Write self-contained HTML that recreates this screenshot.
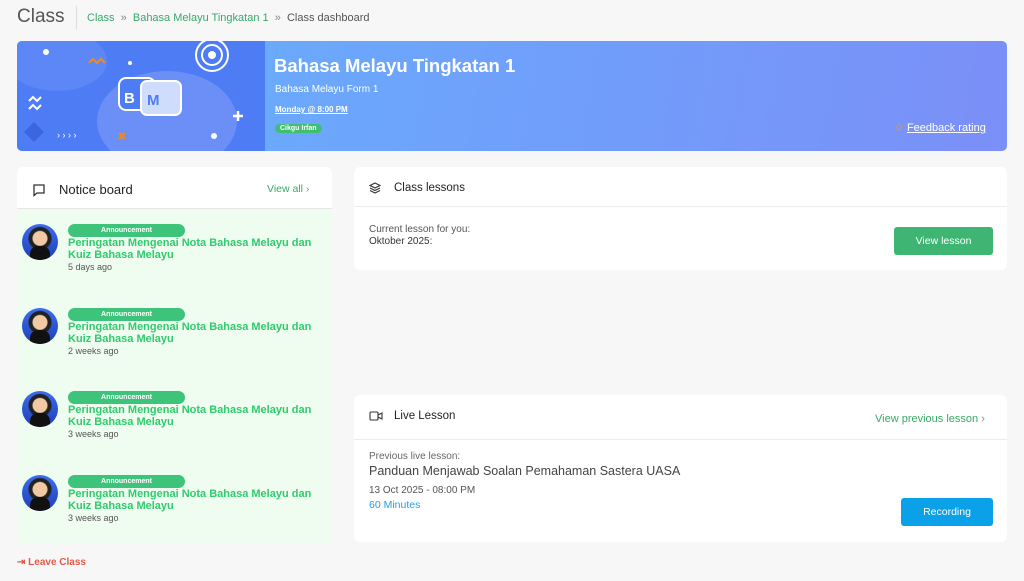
<!DOCTYPE html>
<html><head><style>
*{box-sizing:border-box;margin:0;padding:0}
body{width:1024px;height:581px;background:#f7f7f7;font-family:"Liberation Sans",sans-serif;position:relative;overflow:hidden;color:#333}
.a{position:absolute}
.card{position:absolute;background:#fff;border-radius:6px}
.item .av{position:absolute;left:5px;width:36px;height:36px;border-radius:50%;background:radial-gradient(circle at 50% 40%,#f1c9a5 0 7px,#222 8px 11px,transparent 12px),linear-gradient(#3b6df0,#1f3fb5);overflow:hidden}
.item .av:after{content:"";position:absolute;left:8px;top:22px;width:20px;height:16px;background:#111;border-radius:8px 8px 0 0}
.badge{position:absolute;left:51px;width:117px;height:13px;background:#3ec47a;border-radius:7px;color:#fff;font-size:7px;text-align:center;line-height:13px;font-weight:bold}
.tt{position:absolute;left:51px;color:#2fcb6c;font-weight:bold;font-size:11px;line-height:12px;width:250px}
.tm{position:absolute;left:51px;font-size:9px;color:#555}
.btn{display:flex;align-items:center;justify-content:center}
</style></head><body>
<div class="a" style="left:17px;top:6px;font-size:19px;color:#555">Class</div>
<div class="a" style="left:76px;top:6px;width:1px;height:24px;background:#ddd"></div>
<div class="a" style="left:87px;top:12px;font-size:11px;color:#3aa86a">Class &nbsp;<span style="color:#888">»</span>&nbsp; Bahasa Melayu Tingkatan 1 &nbsp;<span style="color:#888">»</span>&nbsp; <span style="color:#555">Class dashboard</span></div>

<div class="a" style="left:17px;top:41px;width:990px;height:110px;border-radius:5px;overflow:hidden;background:linear-gradient(100deg,#66b3fd 0%,#6fa0fb 50%,#7b8ff8 100%)">
 <svg class="a" style="left:0;top:0" width="248" height="110">
  <rect width="248" height="110" fill="#4e7cf5"/>
  <ellipse cx="150" cy="80" rx="70" ry="50" fill="#6b8ff7"/>
  <ellipse cx="40" cy="20" rx="50" ry="30" fill="#5d87f6"/>
  <circle cx="195" cy="14" r="16" fill="none" stroke="#fff" stroke-width="2"/><circle cx="195" cy="14" r="10" fill="none" stroke="#fff" stroke-width="2"/><circle cx="195" cy="14" r="4" fill="#fff"/>
  <rect x="102" y="37" width="36" height="32" rx="7" fill="#4e7cf5" stroke="#fff" stroke-width="2"/>
  <rect x="124" y="40" width="40" height="34" rx="6" fill="#cfdcfb" stroke="#fff" stroke-width="2"/>
  <text x="107" y="62" fill="#fff" font-size="15" font-weight="bold" font-family="Liberation Sans">B</text>
  <text x="130" y="64" fill="#4e7cf5" font-size="15" font-weight="bold" font-family="Liberation Sans">M</text>
  <path d="M72 22l4-4 4 4 4-4 4 4" stroke="#f08a1c" stroke-width="2" fill="none"/>
  <path d="M12 60l4-4 4 4 4-4M12 68l4-4 4 4 4-4" stroke="#fff" stroke-width="2" fill="none"/>
  <path d="M102 92l6 6M108 92l-6 6" stroke="#f08a1c" stroke-width="2.5"/>
  <path d="M216 75h10M221 70v10" stroke="#fff" stroke-width="2.5"/>
  <text x="40" y="97" fill="#fff" font-size="9" font-family="Liberation Sans">› › › ›</text>
  <circle cx="29" cy="11" r="3" fill="#fff"/><circle cx="113" cy="22" r="2" fill="#fff"/>
  <rect x="10" y="84" width="14" height="14" fill="#3b66e0" transform="rotate(45 17 91)"/>
  <circle cx="197" cy="95" r="3" fill="#fff"/>
 </svg>
 <div class="a" style="left:257px;top:14px;color:#fff;font-size:18.5px;font-weight:bold">Bahasa Melayu Tingkatan 1</div>
 <div class="a" style="left:258px;top:43px;color:#fff;font-size:10px">Bahasa Melayu Form 1</div>
 <div class="a" style="left:258px;top:64px;color:#fff;font-size:8px;font-weight:bold;text-decoration:underline">Monday @ 8:00 PM</div>
 <div class="a" style="left:258px;top:83px;background:#3ebf72;color:#fff;font-size:7px;font-weight:bold;padding:1px 5px;border-radius:6px">Cikgu Irfan</div>
 <div class="a" style="left:877px;top:80px;color:#fff;font-size:11px"><span style="color:#f0a030">☆</span> <u>Feedback rating</u></div>
</div>

<div class="card" style="left:17px;top:167px;width:315px;height:376px;overflow:hidden">
 <svg class="a" style="left:15px;top:16px" width="14" height="14"><path d="M2 2h10v8H5l-3 2.5z" fill="none" stroke="#333" stroke-width="1.3"/></svg>
 <div class="a" style="left:42px;top:15px;font-size:13px;color:#222">Notice board</div>
 <div class="a" style="left:250px;top:16px;font-size:10.5px;color:#3aa86a">View all <span style="color:#888">›</span></div>
 <div class="a" style="left:0;top:41px;width:315px;height:335px;background:#effdf0;border-top:1px solid #e6e6e6"></div>
 <div class="item a" style="left:0;top:57px;width:315px"><div class="av" style="top:0"></div><div class="badge" style="top:0">Announcement</div><div class="tt" style="top:13px">Peringatan Mengenai Nota Bahasa Melayu dan<br>Kuiz Bahasa Melayu</div><div class="tm" style="top:38px">5 days ago</div></div>
 <div class="item a" style="left:0;top:141px;width:315px"><div class="av" style="top:0"></div><div class="badge" style="top:0">Announcement</div><div class="tt" style="top:13px">Peringatan Mengenai Nota Bahasa Melayu dan<br>Kuiz Bahasa Melayu</div><div class="tm" style="top:38px">2 weeks ago</div></div>
 <div class="item a" style="left:0;top:224px;width:315px"><div class="av" style="top:0"></div><div class="badge" style="top:0">Announcement</div><div class="tt" style="top:13px">Peringatan Mengenai Nota Bahasa Melayu dan<br>Kuiz Bahasa Melayu</div><div class="tm" style="top:38px">3 weeks ago</div></div>
 <div class="item a" style="left:0;top:308px;width:315px"><div class="av" style="top:0"></div><div class="badge" style="top:0">Announcement</div><div class="tt" style="top:13px">Peringatan Mengenai Nota Bahasa Melayu dan<br>Kuiz Bahasa Melayu</div><div class="tm" style="top:38px">3 weeks ago</div></div>
</div>

<div class="card" style="left:354px;top:167px;width:653px;height:103px">
 <svg class="a" style="left:15px;top:15px" width="12" height="12"><path d="M6 1L1 3.5 6 6l5-2.5zM1 6l5 2.5L11 6M1 8.5L6 11l5-2.5" fill="none" stroke="#333" stroke-width="1.1"/></svg>
 <div class="a" style="left:40px;top:15px;font-size:11.5px;color:#222">Class lessons</div>
 <div class="a" style="left:0;top:39px;width:653px;height:1px;background:#ececec"></div>
 <div class="a" style="left:15px;top:57px;font-size:10px;color:#555;line-height:12px">Current lesson for you:<br><span style="color:#333">Oktober 2025:</span></div>
 <div class="a btn" style="left:540px;top:60px;width:99px;height:28px;background:#3fb574;border-radius:3px;color:#fff;font-size:10.5px">View lesson</div>
</div>

<div class="card" style="left:354px;top:395px;width:653px;height:147px">
 <svg class="a" style="left:15px;top:16px" width="14" height="10"><rect x="1" y="1" width="8" height="8" rx="1" fill="none" stroke="#333" stroke-width="1.1"/><path d="M9 4l4-2v6L9 6" fill="none" stroke="#333" stroke-width="1.1"/></svg>
 <div class="a" style="left:40px;top:15px;font-size:11.5px;color:#222">Live Lesson</div>
 <div class="a" style="left:521px;top:18px;font-size:11px;color:#3aa86a">View previous lesson <span style="color:#888">›</span></div>
 <div class="a" style="left:0;top:44px;width:653px;height:1px;background:#ececec"></div>
 <div class="a" style="left:15px;top:56px;font-size:10px;color:#666">Previous live lesson:</div>
 <div class="a" style="left:15px;top:69px;font-size:12.5px;color:#444">Panduan Menjawab Soalan Pemahaman Sastera UASA</div>
 <div class="a" style="left:15px;top:90px;font-size:10px;color:#555">13 Oct 2025 - 08:00 PM</div>
 <div class="a" style="left:15px;top:104px;font-size:10.5px;color:#1ea0e8">60 Minutes</div>
 <div class="a btn" style="left:547px;top:103px;width:92px;height:28px;background:#0aa1e8;border-radius:3px;color:#fff;font-size:10.5px">Recording</div>
</div>

<div class="a" style="left:17px;top:557px;font-size:10px;color:#e05a4a;font-weight:bold">⇥ Leave Class</div>
</body></html>
